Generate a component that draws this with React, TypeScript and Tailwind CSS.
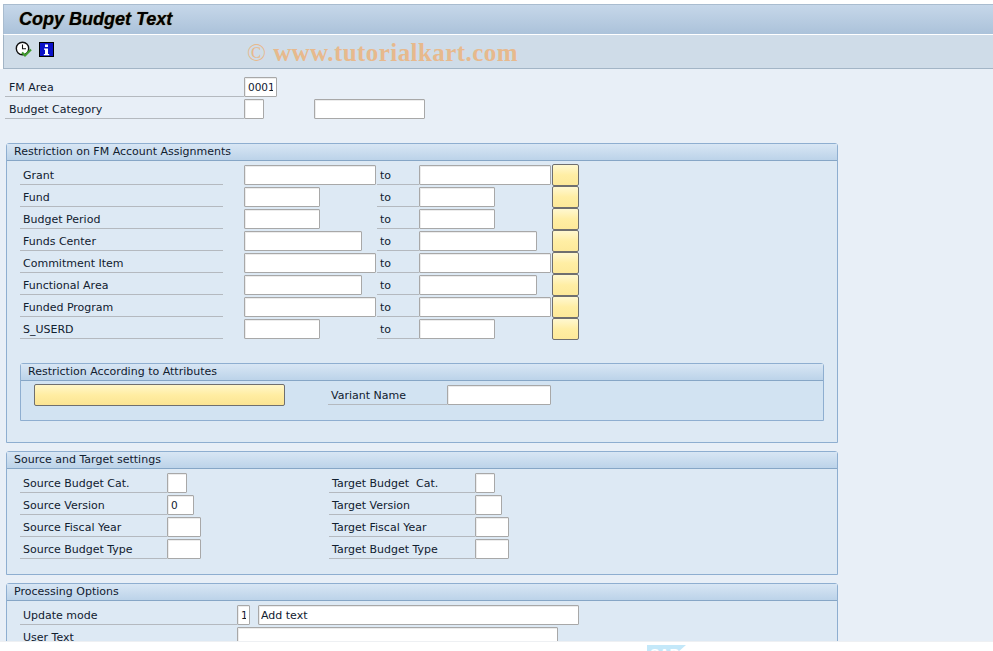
import React from "react";

const UI = "font-['DejaVu_Sans',_sans-serif] text-[11px] text-[#10202f]";

function Field({ w, value = "", mono = false }: { w: string; value?: string; mono?: boolean }) {
  return (
    <input
      readOnly
      value={value}
      className={`${w} h-5 mt-px shrink-0 bg-white border border-[#a8a8a8] rounded-[1px] shadow-[inset_1px_1px_0_#ececec] outline-none text-[#10202f] ${
        mono ? "px-[3px] text-[10.5px]" : "px-[2px] text-[11px]"
      }`}
    />
  );
}

function Label({ w, text, className = "" }: { w: string; text: string; className?: string }) {
  return (
    <div className={`${w} h-[21px] pl-[3px] shrink-0 border-b border-[#b4b9bf] leading-[24px] whitespace-pre ${className}`}>
      {text}
    </div>
  );
}

function Group({ title, nested = false, children, className = "" }: { title: string; nested?: boolean; children: React.ReactNode; className?: string }) {
  return (
    <section className={`border border-[#8eaed0] rounded-t-[3px] ${nested ? "bg-[#d2e3f2]" : "bg-[#dde9f4]"} ${className}`}>
      <div className="h-[17px] border-b border-[#86a6c6] bg-gradient-to-b from-[#d8e6f4] to-[#bcd3e9] pl-[7px] leading-[15px] whitespace-pre">
        {title}
      </div>
      {children}
    </section>
  );
}

function RangeRow({ label, w1, w2 }: { label: string; w1: string; w2: string }) {
  return (
    <div className="flex h-[22px] pl-[13px]">
      <Label w="w-[203px]" text={label} />
      <div className="w-[21px] shrink-0" />
      <div className="w-[133px] shrink-0">
        <Field w={w1} />
      </div>
      <Label w="w-[42px]" text="to" />
      <div className="w-[133px] shrink-0">
        <Field w={w2} />
      </div>
      <button className="w-[27px] h-[22px] shrink-0 rounded-[2px] border border-[#6f6f6f] bg-gradient-to-b from-[#fff8d0] via-[#ffeea4] to-[#fde99a]" />
    </div>
  );
}

function TwoCol({ left, lw, right, rw, value }: { left: string; lw: string; right: string; rw: string; value?: string }) {
  return (
    <div className="flex h-[22px] pl-[13px]">
      <Label w="w-[147px]" text={left} />
      <div className="w-[162px] shrink-0">
        <Field w={lw} value={value} mono />
      </div>
      <Label w="w-[146px]" text={right} />
      <Field w={rw} />
    </div>
  );
}

const ranges: [string, string, string][] = [
  ["Grant", "w-[132px]", "w-[132px]"],
  ["Fund", "w-[76px]", "w-[76px]"],
  ["Budget Period", "w-[76px]", "w-[76px]"],
  ["Funds Center", "w-[118px]", "w-[118px]"],
  ["Commitment Item", "w-[132px]", "w-[132px]"],
  ["Functional Area", "w-[118px]", "w-[118px]"],
  ["Funded Program", "w-[132px]", "w-[132px]"],
  ["S_USERD", "w-[76px]", "w-[76px]"],
];

export default function App() {
  return (
    <div className={`w-[993px] h-[651px] overflow-hidden bg-white flex flex-col ${UI}`}>
      <div className="h-[4px] shrink-0" />
      <div className="pl-[3px] shrink-0">
        <header className="h-[31px] border-t border-l border-[#a9bccf] border-b-white bg-gradient-to-b from-[#c6d7e9] to-[#abc2da] pl-[15px] flex items-center border-b">
          <h1 className="font-['Liberation_Sans',_sans-serif] font-bold italic text-[18px] text-black [text-shadow:0_0_1px_#7a5a20]">
            Copy Budget Text
          </h1>
        </header>
        <div className="h-[34px] border-l border-b border-[#a3b5c6] bg-[#cfdce8] flex items-center pl-[11px]">
          <svg width="18" height="17" viewBox="0 0 18 17" className="shrink-0 -mt-[5px]">
            <circle cx="7.5" cy="7.5" r="6.2" fill="#fff" stroke="#111" strokeWidth="1.4" />
            <path d="M7.5 3.5V7.8H11" fill="none" stroke="#111" strokeWidth="1.1" />
            <path d="M7 11.5l3 3 6-6" fill="none" stroke="#3f9a2d" strokeWidth="2.2" />
          </svg>
          <svg width="15" height="15" viewBox="0 0 15 15" className="shrink-0 ml-[6px] -mt-[5px]">
            <rect x="0.5" y="0.5" width="14" height="14" fill="#0a10c8" stroke="#000" />
            <rect x="6" y="2.5" width="3" height="2.5" fill="#fff" />
            <path d="M5 6.5h4v5.5h1.2v1.3H4.8V12H6V7.8H5z" fill="#fff" />
          </svg>
          <div className="ml-[193px] mt-[1px] font-['Liberation_Serif',_serif] font-bold text-[25px] tracking-[0.44px] leading-none text-[#e7b98d] whitespace-pre">
            <span className="font-normal">©</span> www.tutorialkart.com
          </div>
        </div>
      </div>

      <main className="h-[572px] shrink-0 overflow-hidden bg-[#e8eff7] pt-[7px]">
        <div className="flex h-[22px] pl-[5px]">
          <Label w="w-[239px]" text="FM Area" className="!pl-[4px]" />
          <Field w="w-[33px]" value="0001" mono />
        </div>
        <div className="flex h-[22px] pl-[5px]">
          <Label w="w-[239px]" text="Budget Category" className="!pl-[4px]" />
          <Field w="w-5" />
          <div className="w-[50px]" />
          <Field w="w-[111px]" />
        </div>

        <div className="ml-[6px] w-[832px] mt-[23px]">
          <Group title="Restriction on FM Account Assignments" className="h-[300px]">
            <div className="pt-[3px]">
              {ranges.map(([l, a, b]) => (
                <RangeRow key={l} label={l} w1={a} w2={b} />
              ))}
            </div>
            <div className="mx-[13px] mt-[23px]">
              <Group title="Restriction According to Attributes" nested className="h-[58px]">
                <div className="flex pl-[13px] pt-[3px]">
                  <button className="w-[251px] h-[22px] shrink-0 rounded-[2px] border border-[#6f6f6f] bg-gradient-to-b from-[#fff6c8] via-[#ffeda2] to-[#fbe493]" />
                  <div className="w-[43px] shrink-0" />
                  <Label w="w-[119px]" text="Variant Name" />
                  <Field w="w-[104px]" />
                </div>
              </Group>
            </div>
          </Group>

          <Group title="Source and Target settings" className="h-[124px] mt-[8px]">
            <div className="pt-[3px]">
              <TwoCol left="Source Budget Cat." lw="w-5" right="Target Budget  Cat." rw="w-5" />
              <TwoCol left="Source Version" lw="w-[27px]" value="0" right="Target Version" rw="w-[27px]" />
              <TwoCol left="Source Fiscal Year" lw="w-[34px]" right="Target Fiscal Year" rw="w-[34px]" />
              <TwoCol left="Source Budget Type" lw="w-[34px]" right="Target Budget Type" rw="w-[34px]" />
            </div>
          </Group>

          <Group title="Processing Options" className="h-[80px] mt-[8px]">
            <div className="pt-[3px]">
              <div className="flex h-[22px] pl-[13px]">
                <Label w="w-[217px]" text="Update mode" />
                <Field w="w-[13px]" value="1" mono />
                <div className="w-2" />
                <Field w="w-[321px]" value="Add text" />
              </div>
              <div className="flex h-[22px] pl-[13px]">
                <Label w="w-[217px]" text="User Text" />
                <Field w="w-[321px]" />
              </div>
            </div>
          </Group>
        </div>
      </main>

      <div className="flex-1 border-t border-[#eef0f3] pl-[647px] pt-[3px]">
        <svg width="39" height="7" viewBox="0 0 39 7" className="block">
          <polygon points="0,0 39,0 31,7 0,7" fill="#c4e8f9" />
          <text x="3" y="14" fontFamily="Liberation Sans, sans-serif" fontWeight="700" fontSize="14" fill="#fff">SAP</text>
        </svg>
      </div>
    </div>
  );
}
